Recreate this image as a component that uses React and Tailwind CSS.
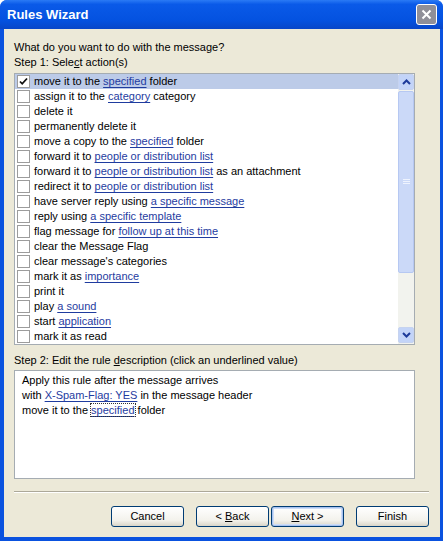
const actions = [
  ['move it to the ', 'specified', ' folder'],
  ['assign it to the ', 'category', ' category'],
  ['delete it'],
  ['permanently delete it'],
  ['move a copy to the ', 'specified', ' folder'],
  ['forward it to ', 'people or distribution list'],
  ['forward it to ', 'people or distribution list', ' as an attachment'],
  ['redirect it to ', 'people or distribution list'],
  ['have server reply using ', 'a specific message'],
  ['reply using ', 'a specific template'],
  ['flag message for ', 'follow up at this time'],
  ['clear the Message Flag'],
  ["clear message's categories"],
  ['mark it as ', 'importance'],
  ['print it'],
  ['play ', 'a sound'],
  ['start ', 'application'],
  ['mark it as read'],
];

const Link = ({ children, focus }) => (
  <span
    className={`text-[#1f3c9f] underline underline-offset-[2px] ${
      focus ? 'outline outline-1 outline-dotted outline-[#333]' : ''
    }`}
  >
    {children}
  </span>
);

const Checkbox = ({ checked }) => (
  <span className="flex h-[13px] w-[13px] shrink-0 items-center justify-center border border-[#9c9c9c] bg-white">
    {checked && (
      <svg width="9" height="9" viewBox="0 0 9 9">
        <path d="M1 4.5 L3.2 6.8 L8 1.5" fill="none" stroke="#111" strokeWidth="1.8" />
      </svg>
    )}
  </span>
);

const Chevron = ({ up }) => (
  <svg width="9" height="6" viewBox="0 0 9 6">
    <path
      d={up ? 'M1 5 L4.5 1.5 L8 5' : 'M1 1 L4.5 4.5 L8 1'}
      fill="none"
      stroke="#1c3a9a"
      strokeWidth="2"
    />
  </svg>
);

const Button = ({ children, isDefault }) => (
  <button
    className={`h-[21px] w-[73px] rounded-[3px] border border-[#003c74] bg-[linear-gradient(#ffffff,#f3f2ec_70%,#d9d5c8)] text-[11px] text-black ${
      isDefault ? 'shadow-[inset_0_0_0_1px_#a8c3f0,inset_0_0_0_2px_#cddcf6]' : ''
    }`}
  >
    {children}
  </button>
);

export default function App() {
  return (
    <div className="flex h-[541px] w-[443px] flex-col overflow-hidden rounded-t-[7px] bg-[#0a52df] font-['Liberation_Sans',sans-serif] text-[11px] leading-[15px] text-black">
      <div className="flex h-[29px] shrink-0 items-center bg-[linear-gradient(#2a7af5,#0a5ae8_15%,#0452e0_70%,#0846c8)] pl-[7px] pr-[6px]">
        <span className="text-[13px] font-bold text-white">Rules Wizard</span>
        <span className="ml-auto flex h-[21px] w-[21px] items-center justify-center rounded-[3px] border border-white bg-[#8f8f98]">
          <svg width="11" height="11" viewBox="0 0 11 11">
            <path d="M1.5 1.5 L9.5 9.5 M9.5 1.5 L1.5 9.5" stroke="#fff" strokeWidth="2" />
          </svg>
        </span>
      </div>

      <div className="mb-[4px] ml-[4px] mr-[3px] flex flex-1 flex-col bg-[#ece9d8] pl-[10px] pr-[11px] pt-[11px]">
        <div>What do you want to do with the message?</div>
        <div>
          Step 1: Sele<span className="underline">c</span>t action(s)
        </div>

        <div className="mt-[3px] flex h-[272px] w-[401px] border border-[#a5acb2] bg-white">
          <div className="flex-1">
            {actions.map((a, i) => (
              <div
                key={i}
                className={`flex h-[15px] items-center gap-[4px] pl-[2px] ${
                  i === 0 ? 'bg-[#bccbe8]' : ''
                }`}
              >
                <Checkbox checked={i === 0} />
                <span className="whitespace-nowrap">
                  {a[0]}
                  {a[1] && <Link>{a[1]}</Link>}
                  {a[2]}
                </span>
              </div>
            ))}
          </div>

          <div className="flex w-[16px] flex-col bg-[#f2f3ee]">
            <div className="flex h-[16px] items-center justify-center rounded-[2px] border border-[#c6d3f0] bg-[#c3d4f8]">
              <Chevron up />
            </div>
            <div className="mt-[1px] flex h-[182px] items-center justify-center rounded-[2px] border border-[#b6c8f2] bg-[#cbd9f8]">
              <svg width="7" height="6" viewBox="0 0 7 6">
                <path d="M0 0.5 H7 M0 2.5 H7 M0 4.5 H7" stroke="#eef3fe" strokeWidth="1" />
              </svg>
            </div>
            <div className="flex-1" />
            <div className="mb-[1px] flex h-[16px] items-center justify-center rounded-[2px] border border-[#c6d3f0] bg-[#c3d4f8]">
              <Chevron />
            </div>
          </div>
        </div>

        <div className="mt-[8px]">
          Step 2: Edit the rule <span className="underline">d</span>escription (click an underlined value)
        </div>
        <div className="mt-[2px] h-[109px] w-[401px] border border-[#a5acb2] bg-white pl-[7px] pt-[2px]">
          <div>Apply this rule after the message arrives</div>
          <div>
            with <Link>X-Spam-Flag: YES</Link> in the message header
          </div>
          <div>
            move it to the <Link focus>specified</Link> folder
          </div>
        </div>

        <div className="mt-[12px] h-[2px] border-t border-[#aca899] border-b border-b-white" />

        <div className="mt-[13px] flex justify-end">
          <Button>Cancel</Button>
          <div className="ml-[12px] flex gap-[2px]">
            <Button>
              &lt; <span className="underline">B</span>ack
            </Button>
            <Button isDefault>
              <span className="underline">N</span>ext &gt;
            </Button>
          </div>
          <div className="ml-[12px]">
            <Button>Finish</Button>
          </div>
        </div>
      </div>
    </div>
  );
}
